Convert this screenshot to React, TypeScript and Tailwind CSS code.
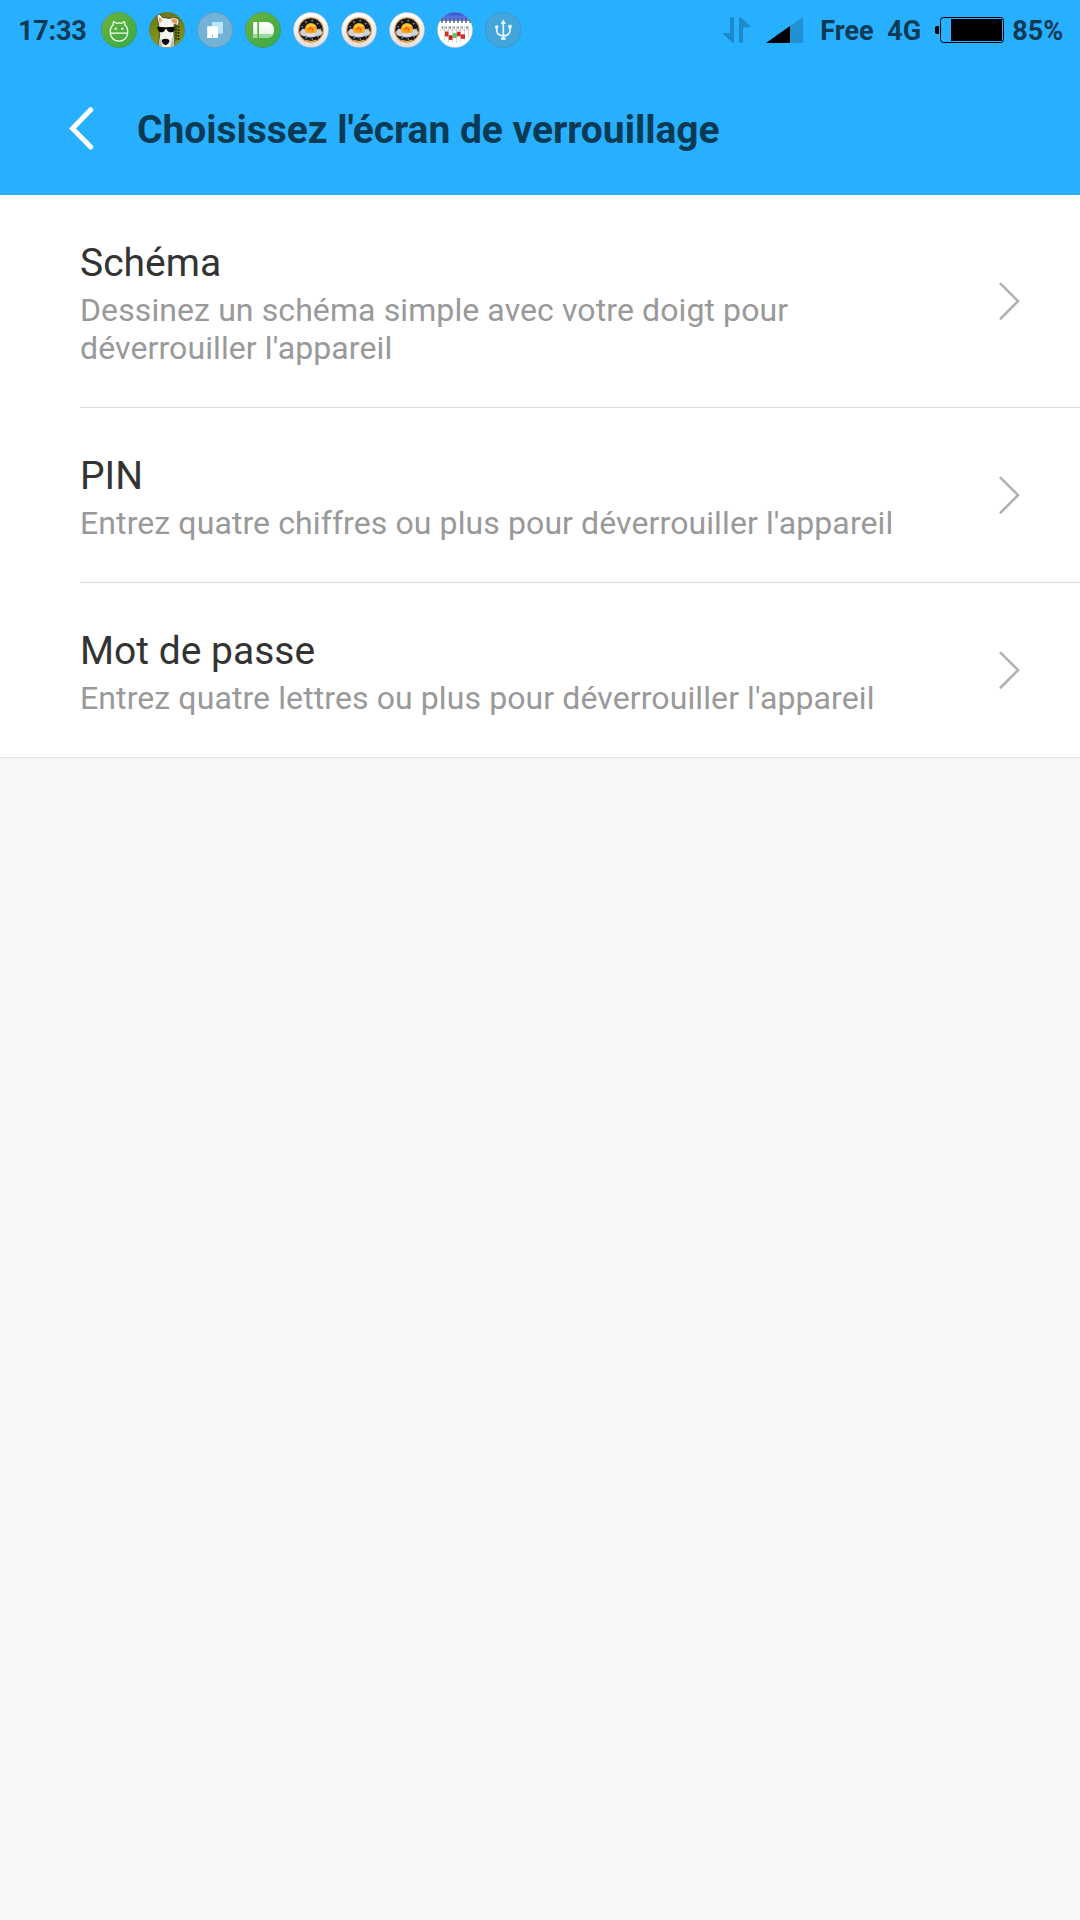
import React from "react";

interface IBadgeProps {
  fill: string;
  children?: React.ReactNode;
}
// round notification icon, 36px
const Badge: React.FC<IBadgeProps> = ({ fill, children }) => (
  <svg className="h-9 w-9" viewBox="0 0 36 36">
    <defs>
      <linearGradient id="green" x1="0" y1="0" x2="1" y2="1">
        <stop offset="0" stopColor="#6db33c" />
        <stop offset="1" stopColor="#35a946" />
      </linearGradient>
      <linearGradient id="silver" x1="0" y1="0" x2="0" y2="1">
        <stop offset="0" stopColor="#ffffff" />
        <stop offset="1" stopColor="#dedede" />
      </linearGradient>
      <linearGradient id="olive" x1="0" y1="0" x2="0" y2="1">
        <stop offset="0" stopColor="#69780f" />
        <stop offset="1" stopColor="#8a9c1c" />
      </linearGradient>
      <linearGradient id="fade" x1="0" y1="0" x2="0" y2="1">
        <stop offset="0" stopColor="#ffffff" />
        <stop offset="1" stopColor="#e2f2e2" />
      </linearGradient>
      <linearGradient id="blue" x1="0" y1="0" x2="0" y2="1">
        <stop offset="0" stopColor="#2b50d0" />
        <stop offset="1" stopColor="#6b8bee" />
      </linearGradient>
      <clipPath id="round">
        <circle cx="18" cy="18" r="17.8" />
      </clipPath>
    </defs>
    <g clipPath="url(#round)">
      <rect width="36" height="36" fill={fill} />
      {children}
    </g>
    <circle
      cx="18"
      cy="18"
      r="17.6"
      fill="none"
      stroke="#4a6a80"
      strokeOpacity="0.4"
      strokeWidth="0.7"
    />
  </svg>
);

const AndroidBadge = () => (
  <Badge fill="url(#green)">
    <g fill="none" stroke="#f4fff0" strokeWidth="1.3" strokeLinejoin="round">
      <path d="M9.3 20.5C9 16.5 10.3 14.3 12.1 12.9L12.2 10.2Q12.5 9.4 13.4 10L15.2 11.3Q18 10.4 20.8 11.3L22.6 10Q23.5 9.4 23.8 10.2L23.9 12.9C25.7 14.3 27 16.5 26.7 20.5C26.7 25.6 22.8 29.1 18 29.1S9.3 25.6 9.3 20.5Z" />
      <path d="M9.3 21.2H26.7" />
    </g>
    <rect x="13.7" y="15.8" width="1.9" height="1.9" fill="#fff" />
    <rect x="20.4" y="15.8" width="1.9" height="1.9" fill="#fff" />
  </Badge>
);

const DogBadge = () => (
  <Badge fill="url(#olive)">
    <path
      d="M27 10.5V29M29.5 14V28"
      stroke="#28300b"
      strokeWidth="1.8"
      strokeDasharray="2 1"
    />
    <path
      d="M8.2 2.8Q10.5 .9 13.5 5.6L20.5 6.4Q25.5 4.4 29.5 7.2Q31 10 28.6 13.4L25.2 12.2L24.8 22.5L26 36H9L10.8 22L9.6 12Q7.6 6 8.2 2.8Z"
      fill="#f4f4f2"
      stroke="#332b1c"
      strokeWidth="0.7"
    />
    <path d="M9.8 5.4Q12 5 13.2 8.3L10.8 11.5Q9.3 8 9.8 5.4Z" fill="#e6a66c" />
    <path d="M22 8.2Q25.5 5.8 28.4 8.5L27.6 12L24 11.2Z" fill="#dd9c61" />
    <path d="M11 26L9 36H14ZM23.5 24L26 36H21Z" fill="#b9bab5" />
    <path
      d="M8.2 14.7L17 15.2L25.8 14.7Q26.2 20.3 22.3 20.3Q18.6 20.3 17.5 16.9H16.5Q15.4 20.3 12.2 20.3Q8.6 20 8.2 14.7Z"
      fill="#080808"
    />
    <path
      d="M12.6 28.1Q16.2 25.3 20.4 28.1Q20.5 31.8 16.6 33.3Q12.8 32 12.6 28.1Z"
      fill="#0b0b0b"
    />
  </Badge>
);

const CopyBadge = () => (
  <Badge fill="#71b2d6">
    <rect x="15.2" y="10" width="10.8" height="11.6" fill="#b9e6fa" />
    <rect x="10.2" y="14.2" width="10.8" height="11.8" fill="#fff" />
    <rect x="15" y="23.1" width="1" height="1.6" fill="#4ba8dc" />
  </Badge>
);

const BulletBadge = () => (
  <Badge fill="url(#green)">
    <path d="M8.2 10H12.3V26H8.2Z" fill="url(#fade)" />
    <path d="M14 10H22Q29 10.5 29 18Q29 25.5 22 26H14Z" fill="url(#fade)" />
    <path
      d="M8.2 22H12.3V26H8.2ZM14 22H27.6Q25.5 25.8 22 26H14Z"
      fill="#8bd08f"
      fillOpacity="0.8"
    />
  </Badge>
);

const WeatherBadge = () => (
  <Badge fill="url(#silver)">
    <circle cx="18" cy="18" r="12" fill="#161a20" />
    <circle
      cx="18"
      cy="18"
      r="12.2"
      fill="none"
      stroke="#dc8a2c"
      strokeWidth="1.1"
    />
    <circle
      cx="18"
      cy="18"
      r="9.3"
      fill="none"
      stroke="#8f959d"
      strokeWidth="1.8"
      strokeDasharray="1.3 5"
    />
    <path
      d="M7 20.5Q8.5 15.6 12.5 17.3L18 20L23 17.6Q27.5 15.6 29.3 20.5Q28.6 24.3 24.5 23.8Q18 27 12.6 24.2Q7.9 24.8 7 20.5Z"
      fill="#cdd2da"
    />
    <circle cx="18" cy="17" r="6.1" fill="#ffa61a" />
    <path
      d="M13.8 15.2Q17.5 10.8 22 14.6"
      fill="none"
      stroke="#ffd53d"
      strokeWidth="1.8"
    />
    <path
      d="M15.8 18.8Q15.6 15.6 18.6 16Q20.8 17.6 18.8 19.4"
      fill="none"
      stroke="#e9680f"
      strokeWidth="1.4"
    />
    <path
      d="M12.8 22.5Q15 20 18 21.6Q20.5 19.8 23.4 22Q18 25.6 12.8 22.5Z"
      fill="#dfe2e8"
    />
    <path
      d="M13 28.4Q18 30.6 23 28.4"
      fill="none"
      stroke="#ffb629"
      strokeWidth="1.2"
    />
  </Badge>
);

const CalendarBadge = () => (
  <Badge fill="#fff">
    <rect width="36" height="9" fill="url(#blue)" />
    <path
      d="M5 6V11M9 6V11M13 6V11M17 6V11M21 6V11M25 6V11M29 6V11M33 6V11"
      stroke="#4b5161"
      strokeWidth="1.3"
    />
    <path
      d="M4.5 15.5H6.5M8.5 15.5H10M12 15.5H14M16.5 15.5H18M20.5 15.5H22M24.5 15.5H26M29 15.5H31"
      stroke="#858585"
      strokeWidth="1.8"
    />
    <path
      d="M3 18H33M7.5 14V28M11.5 14V30M15.5 14V31M19.5 14V31M23.5 14V30M27.5 14V28M31.5 14V26"
      stroke="#c4c4c4"
      strokeWidth="0.7"
      fill="none"
    />
    <g>
      <rect x="8" y="19.5" width="3.4" height="5" fill="#d92a25" />
      <rect x="11.8" y="23.3" width="3.7" height="4.6" fill="#c9201d" />
      <rect x="16" y="21.2" width="3.7" height="4.8" fill="#4fca55" />
      <rect x="19.9" y="19.7" width="3.7" height="4.6" fill="#d92a25" />
      <rect x="23.8" y="22.4" width="4.2" height="4.4" fill="#d92a25" />
    </g>
  </Badge>
);

const UsbBadge = () => (
  <Badge fill="#42a5dc">
    <g fill="none" stroke="#e8f7ff" strokeWidth="1.7">
      <path d="M18.3 10V27.5" />
      <path d="M11.7 15.5V18.5Q12 23.5 18.3 23.8Q24.8 23.5 25 18.5V14.5" />
    </g>
    <path d="M18.3 7.6L21 12H15.6Z" fill="#e8f7ff" />
    <circle cx="11.7" cy="15" r="1.8" fill="#e8f7ff" />
    <rect x="23.3" y="12.8" width="3.4" height="3.4" fill="#e8f7ff" />
    <rect x="16" y="25.4" width="4.6" height="2.4" fill="#e8f7ff" />
  </Badge>
);

const StatusBar = () => (
  <div className="flex h-15 items-center justify-between pr-[17px] pl-[18px] text-[27px] font-bold leading-8 text-[#0d3a55]">
    <div className="flex items-center">
      <span className="w-[83px] whitespace-nowrap pt-0.5 tracking-[-0.2px]">
        17:33
      </span>
      <div className="flex gap-3">
        <AndroidBadge />
        <DogBadge />
        <CopyBadge />
        <BulletBadge />
        <WeatherBadge />
        <WeatherBadge />
        <WeatherBadge />
        <CalendarBadge />
        <UsbBadge />
      </div>
    </div>
    <div className="flex items-center">
      <svg className="mr-[15px] h-[26px] w-7" viewBox="0 0 28 26" fill="#1f8ac9">
        <path d="M7 1Q7 0 9 0T11 1V26H9.6L0 17V16H7Z" />
        <path d="M20 25Q20 26 18 26T16 25V0H17.4L27.5 9.5V10.2H20Z" />
      </svg>
      <svg className="mr-[17px] h-[26px] w-[37px]" viewBox="0 0 37 26">
        <path d="M0 26L37 0V26Z" fill="#2291d3" />
        <path d="M0 26L24 9.1V26Z" fill="#000" />
      </svg>
      <span className="w-[67px] pt-0.5">Free</span>
      <span className="w-12 pt-0.5">4G</span>
      <svg className="mr-2 h-[26px] w-[69px]" viewBox="0 0 69 26">
        <path d="M4 9H2Q0 9 0 11V15Q0 17 2 17H4Z" fill="#000" />
        <rect
          x="5.5"
          y="0.5"
          width="63"
          height="25"
          rx="3"
          fill="none"
          stroke="#000"
        />
        <rect x="16" y="2" width="51" height="22" fill="#000" />
      </svg>
      <span className="pt-0.5 tracking-[-0.1px]">85%</span>
    </div>
  </div>
);

const Header = () => (
  <header className="h-[195px] bg-[#27b0ff]">
    <StatusBar />
    <div className="flex h-[135px] items-center pl-[69px]">
      <svg className="h-11 w-[26px]" viewBox="0 0 26 44">
        <path
          d="M21.7 3.7L3.5 22.5L21.7 41"
          fill="none"
          stroke="#fff"
          strokeWidth="5"
          strokeLinecap="round"
        />
      </svg>
      <h1 className="pt-[5px] pl-[42px] text-[39px] font-bold tracking-[-0.04px] text-[#0b3a55]">
        Choisissez l'écran de verrouillage
      </h1>
    </div>
  </header>
);

interface IOption {
  title: string;
  summary: string;
}
const options: Array<IOption> = [
  {
    title: "Schéma",
    summary: "Dessinez un schéma simple avec votre doigt pour déverrouiller l'appareil",
  },
  {
    title: "PIN",
    summary: "Entrez quatre chiffres ou plus pour déverrouiller l'appareil",
  },
  {
    title: "Mot de passe",
    summary: "Entrez quatre lettres ou plus pour déverrouiller l'appareil",
  },
];

const OptionRow: React.FC<IOption> = ({ title, summary }) => (
  <li className="ml-20 flex items-center justify-between border-b border-[#d9d9d9] pt-[45px] pr-[59px] pb-10 last:ml-0 last:border-[#e3e3e3] last:pl-20">
    <div className="w-[860px]">
      <div className="text-[39px] leading-[46px] text-[#333]">{title}</div>
      <p className="pt-[5px] text-[32px] leading-[38px] tracking-[0.1px] text-[#999]">
        {summary}
      </p>
    </div>
    <svg className="mb-1.5 h-10 w-[23px]" viewBox="0 0 23 40">
      <path
        d="M2.7 2.9L20 20.2L2.7 37.5"
        fill="none"
        stroke="#b2b2b2"
        strokeWidth="2.6"
        strokeLinecap="round"
      />
    </svg>
  </li>
);

export default function App() {
  return (
    <div className="h-[1920px] w-[1080px] overflow-hidden bg-[#f7f7f7] font-['Roboto',sans-serif]">
      <Header />
      <ul className="bg-white">
        {options.map((option) => (
          <OptionRow key={option.title} {...option} />
        ))}
      </ul>
    </div>
  );
}
